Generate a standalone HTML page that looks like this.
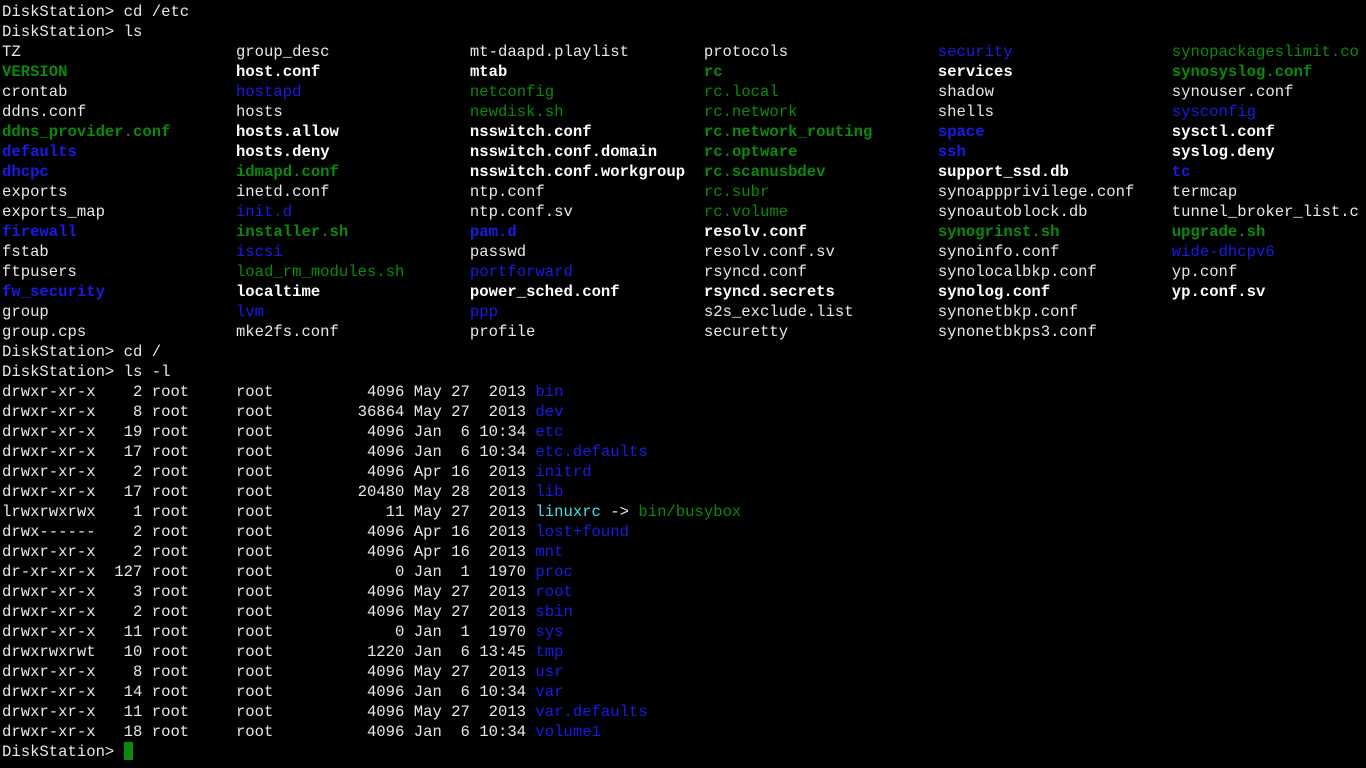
<!DOCTYPE html>
<html><head><meta charset="utf-8"><style>
html,body{margin:0;padding:0;background:#000;width:1366px;height:768px;overflow:hidden}
pre{margin:0;position:absolute;left:2px;top:2px;font-family:"Liberation Mono",monospace;font-size:15.6px;line-height:20px;color:#e8e8e8;white-space:pre}
.g{color:#0a8a0a}.G{color:#0a8a0a;font-weight:bold}
.b{color:#1a1ae6}.B{color:#1a1ae6;font-weight:bold}
.w{color:#fff;font-weight:bold}.c{color:#3fe0e8}
.cur{display:inline-block;width:9px;height:18px;background:#0c8a0c;vertical-align:-4px}
</style></head><body><pre>DiskStation&gt; cd /etc
DiskStation&gt; ls
TZ                       group_desc               mt-daapd.playlist        protocols                <span class="b">security</span>                 <span class="g">synopackageslimit.co</span>
<span class="G">VERSION</span>                  <span class="w">host.conf</span>                <span class="w">mtab</span>                     <span class="G">rc</span>                       <span class="w">services</span>                 <span class="G">synosyslog.conf</span>
crontab                  <span class="b">hostapd</span>                  <span class="g">netconfig</span>                <span class="g">rc.local</span>                 shadow                   synouser.conf
ddns.conf                hosts                    <span class="g">newdisk.sh</span>               <span class="g">rc.network</span>               shells                   <span class="b">sysconfig</span>
<span class="G">ddns_provider.conf</span>       <span class="w">hosts.allow</span>              <span class="w">nsswitch.conf</span>            <span class="G">rc.network_routing</span>       <span class="B">space</span>                    <span class="w">sysctl.conf</span>
<span class="B">defaults</span>                 <span class="w">hosts.deny</span>               <span class="w">nsswitch.conf.domain</span>     <span class="G">rc.optware</span>               <span class="B">ssh</span>                      <span class="w">syslog.deny</span>
<span class="B">dhcpc</span>                    <span class="G">idmapd.conf</span>              <span class="w">nsswitch.conf.workgroup</span>  <span class="G">rc.scanusbdev</span>            <span class="w">support_ssd.db</span>           <span class="B">tc</span>
exports                  inetd.conf               ntp.conf                 <span class="g">rc.subr</span>                  synoappprivilege.conf    termcap
exports_map              <span class="b">init.d</span>                   ntp.conf.sv              <span class="g">rc.volume</span>                synoautoblock.db         tunnel_broker_list.c
<span class="B">firewall</span>                 <span class="G">installer.sh</span>             <span class="B">pam.d</span>                    <span class="w">resolv.conf</span>              <span class="G">synogrinst.sh</span>            <span class="G">upgrade.sh</span>
fstab                    <span class="b">iscsi</span>                    passwd                   resolv.conf.sv           synoinfo.conf            <span class="b">wide-dhcpv6</span>
ftpusers                 <span class="g">load_rm_modules.sh</span>       <span class="b">portforward</span>              rsyncd.conf              synolocalbkp.conf        yp.conf
<span class="B">fw_security</span>              <span class="w">localtime</span>                <span class="w">power_sched.conf</span>         <span class="w">rsyncd.secrets</span>           <span class="w">synolog.conf</span>             <span class="w">yp.conf.sv</span>
group                    <span class="b">lvm</span>                      <span class="b">ppp</span>                      s2s_exclude.list         synonetbkp.conf
group.cps                mke2fs.conf              profile                  securetty                synonetbkps3.conf
DiskStation&gt; cd /
DiskStation&gt; ls -l
drwxr-xr-x    2 root     root          4096 May 27  2013 <span class="b">bin</span>
drwxr-xr-x    8 root     root         36864 May 27  2013 <span class="b">dev</span>
drwxr-xr-x   19 root     root          4096 Jan  6 10:34 <span class="b">etc</span>
drwxr-xr-x   17 root     root          4096 Jan  6 10:34 <span class="b">etc.defaults</span>
drwxr-xr-x    2 root     root          4096 Apr 16  2013 <span class="b">initrd</span>
drwxr-xr-x   17 root     root         20480 May 28  2013 <span class="b">lib</span>
lrwxrwxrwx    1 root     root            11 May 27  2013 <span class="c">linuxrc</span> -&gt; <span class="g">bin/busybox</span>
drwx------    2 root     root          4096 Apr 16  2013 <span class="b">lost+found</span>
drwxr-xr-x    2 root     root          4096 Apr 16  2013 <span class="b">mnt</span>
dr-xr-xr-x  127 root     root             0 Jan  1  1970 <span class="b">proc</span>
drwxr-xr-x    3 root     root          4096 May 27  2013 <span class="b">root</span>
drwxr-xr-x    2 root     root          4096 May 27  2013 <span class="b">sbin</span>
drwxr-xr-x   11 root     root             0 Jan  1  1970 <span class="b">sys</span>
drwxrwxrwt   10 root     root          1220 Jan  6 13:45 <span class="b">tmp</span>
drwxr-xr-x    8 root     root          4096 May 27  2013 <span class="b">usr</span>
drwxr-xr-x   14 root     root          4096 Jan  6 10:34 <span class="b">var</span>
drwxr-xr-x   11 root     root          4096 May 27  2013 <span class="b">var.defaults</span>
drwxr-xr-x   18 root     root          4096 Jan  6 10:34 <span class="b">volume1</span>
DiskStation&gt; <span class="cur"></span></pre></body></html>
